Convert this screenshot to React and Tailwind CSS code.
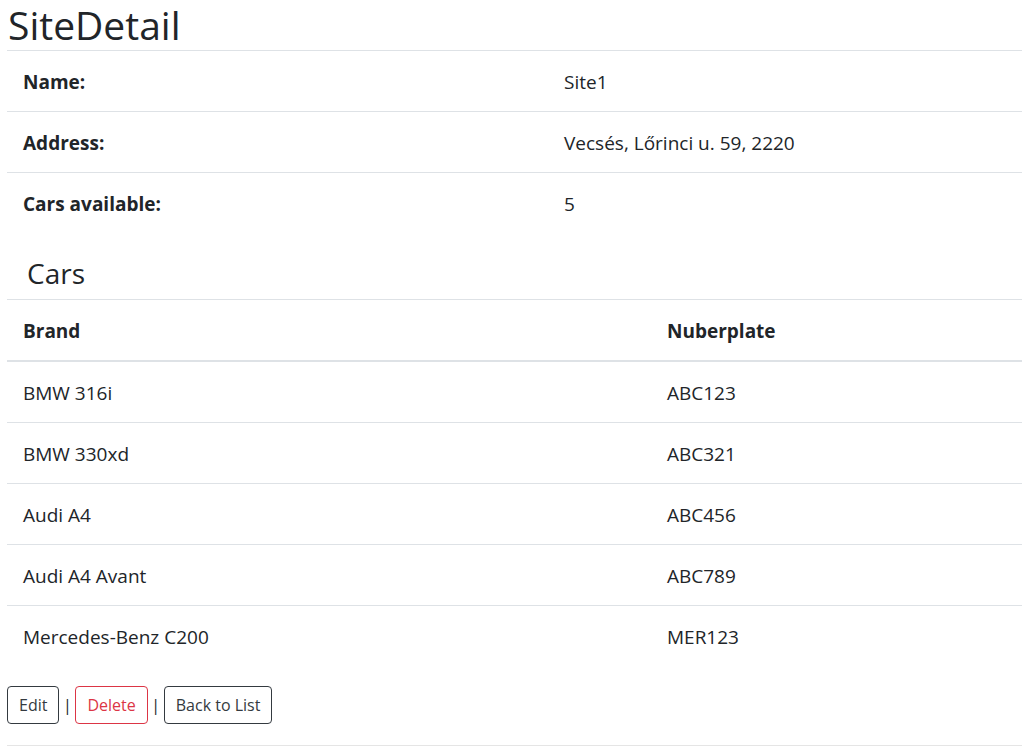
import React from "react";

const info = [
  ["Name:", "Site1"],
  ["Address:", "Vecsés, Lőrinci u. 59, 2220"],
  ["Cars available:", "5"],
];

const cars = [
  ["BMW 316i", "ABC123"],
  ["BMW 330xd", "ABC321"],
  ["Audi A4", "ABC456"],
  ["Audi A4 Avant", "ABC789"],
  ["Mercedes-Benz C200", "MER123"],
];

export default function App() {
  return (
    <div className="min-h-[752px] bg-white pl-[7px] text-[19px] text-[#212529] font-['Segoe_UI','Open_Sans',sans-serif]">
      <h1 className="pl-[1px] text-[39px] leading-[50px] font-medium">SiteDetail</h1>
      <table className="w-[1015px] border-collapse">
        <tbody>
          {info.map(([k, v]) => (
            <tr key={k}>
              <th className="w-[541px] border-t border-[#dee2e6] px-4 pt-[17px] pb-[15px] text-left font-bold leading-[28px]">{k}</th>
              <td className="border-t border-[#dee2e6] px-4 pt-[17px] pb-[15px] leading-[28px]">{v}</td>
            </tr>
          ))}
        </tbody>
      </table>
      <h3 className="mt-[23px] mb-[9px] pl-[20px] text-[28px] leading-[34px] font-medium">Cars</h3>
      <table className="w-[1015px] border-collapse">
        <thead>
          <tr>
            <th className="w-[644px] border-t border-b-2 border-[#dee2e6] px-4 pt-[17px] pb-[15px] text-left font-bold leading-[28px]">Brand</th>
            <th className="border-t border-b-2 border-[#dee2e6] px-4 pt-[17px] pb-[15px] text-left font-bold leading-[28px]">Nuberplate</th>
          </tr>
        </thead>
        <tbody>
          {cars.map(([b, n]) => (
            <tr key={n}>
              <td className="border-t border-[#dee2e6] px-4 pt-[17px] pb-[15px] leading-[28px]">{b}</td>
              <td className="border-t border-[#dee2e6] px-4 pt-[17px] pb-[15px] leading-[28px]">{n}</td>
            </tr>
          ))}
        </tbody>
      </table>
      <div className="mt-5 flex items-center text-[16px]">
        <button className="rounded border border-[#343a40] px-[11px] py-1.5 leading-6 text-[#343a40]">Edit</button>
        <span className="w-4 text-center">|</span>
        <button className="rounded border border-[#dc3545] px-[11px] py-1.5 leading-6 text-[#dc3545]">Delete</button>
        <span className="w-4 text-center">|</span>
        <button className="rounded border border-[#343a40] px-[11px] py-1.5 leading-6 text-[#343a40]">Back to List</button>
      </div>
      <div className="mt-[21px] w-[1015px] border-t border-[#e5e5e5]" />
    </div>
  );
}
